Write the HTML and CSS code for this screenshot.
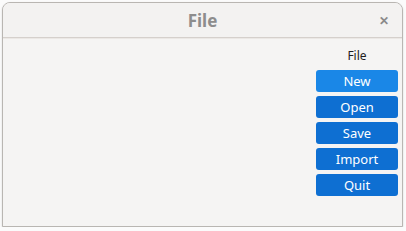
FILE: index.html
```html
<!DOCTYPE html>
<html lang="en">
<head>
  <meta charset="UTF-8">
  <title>File</title>
  <link rel="stylesheet" href="styles.css">
</head>
<body>
  <div class="window">
    <div class="titlebar">
      <span class="title">File</span>
      <span class="close">&#x2715;</span>
    </div>
    <div class="content">
      <div class="menu">
        <div class="menu-label">File</div>
        <button class="btn btn-focus">New</button>
        <button class="btn">Open</button>
        <button class="btn">Save</button>
        <button class="btn">Import</button>
        <button class="btn">Quit</button>
      </div>
    </div>
  </div>
</body>
</html>
```

FILE: styles.css
```css
/* Base */
body {
  margin: 0;
  padding: 2px 0 0 2px;
  background: #fbfbfb;
  font-family: "Noto Sans", "Open Sans", sans-serif;
}

/* Window frame */
.window {
  width: 399px;
  height: 223px;
  border: 1px solid #b9b6b2;
  border-radius: 8px 8px 0 0;
  background: #f5f4f3;
  box-shadow: 0 1px 2px rgba(0,0,0,0.15);
  display: flex;
  flex-direction: column;
  overflow: hidden;
}

.titlebar {
  position: relative;
  height: 34px;
  border-bottom: 1px solid #d5d0cc;
  background: #f3f2f1;
  display: flex;
  align-items: center;
  justify-content: center;
}

.title {
  font-size: 17px;
  font-weight: bold;
  color: #8d8d8d;
}

.close {
  position: absolute;
  right: 13px;
  top: 9px;
  font-size: 12px;
  font-weight: bold;
  color: #8a8a8a;
}

/* Content */
.content {
  flex: 1;
  display: flex;
  justify-content: flex-end;
  border-top: 1px solid #ebe8e5;
  padding: 7px 4px 0 0;
}

.menu {
  width: 82px;
  display: flex;
  flex-direction: column;
  gap: 4px;
}

.menu-label {
  text-align: center;
  font-size: 12px;
  color: #1e1e1e;
  height: 20px;
  line-height: 20px;
}

.btn {
  height: 22px;
  padding: 0;
  border: none;
  border-radius: 3px;
  background: #0e6fd2;
  color: #fff;
  font-family: inherit;
  font-size: 13px;
}

.btn-focus {
  background: #1a87e7;
}
```
